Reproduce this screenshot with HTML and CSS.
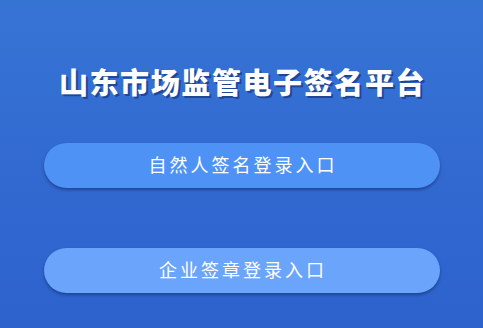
FILE: index.html
```html
<!DOCTYPE html>
<html lang="zh">
<head>
<meta charset="utf-8">
<link rel="stylesheet" href="styles.css">
</head>
<body>
<main class="page">
  <h1 class="title">山东市场监管电子签名平台</h1>
  <div class="entries">
    <a class="entry entry-person" href="#">自然人签名登录入口</a>
    <a class="entry entry-company" href="#">企业签章登录入口</a>
  </div>
</main>
</body>
</html>
```
FILE: styles.css
```css
html, body {
  margin: 0;
  padding: 0;
}
body {
  width: 483px;
  height: 328px;
  overflow: hidden;
  background: linear-gradient(180deg, #3674d4 0%, #3168d0 60%, #2d62cc 100%);
  font-family: "Noto Sans CJK SC", "Noto Sans", sans-serif;
}
.page {
  display: flex;
  flex-direction: column;
  align-items: center;
  padding-top: 64px;
}
.title {
  margin: 0;
  font-size: 29px;
  font-weight: 900;
  line-height: 34px;
  letter-spacing: 1.6px;
  color: #ffffff;
  text-shadow: 2px 2px 0 #1f4595;
  padding-left: 2px;
}
.entries {
  display: flex;
  flex-direction: column;
  gap: 60px;
  margin-top: 45px;
}
.entry {
  display: flex;
  align-items: center;
  justify-content: center;
  width: 396px;
  height: 45px;
  border-radius: 23px;
  color: #ffffff;
  text-decoration: none;
  font-size: 18px;
  letter-spacing: 3px;
  padding-left: 3px;
  padding-bottom: 3px;
  box-sizing: border-box;
  box-shadow: 0 2px 3px rgba(10, 30, 80, 0.45);
}
.entry-person {
  background: #4e92f6;
}
.entry-company {
  background: #6aa4fb;
}
```
